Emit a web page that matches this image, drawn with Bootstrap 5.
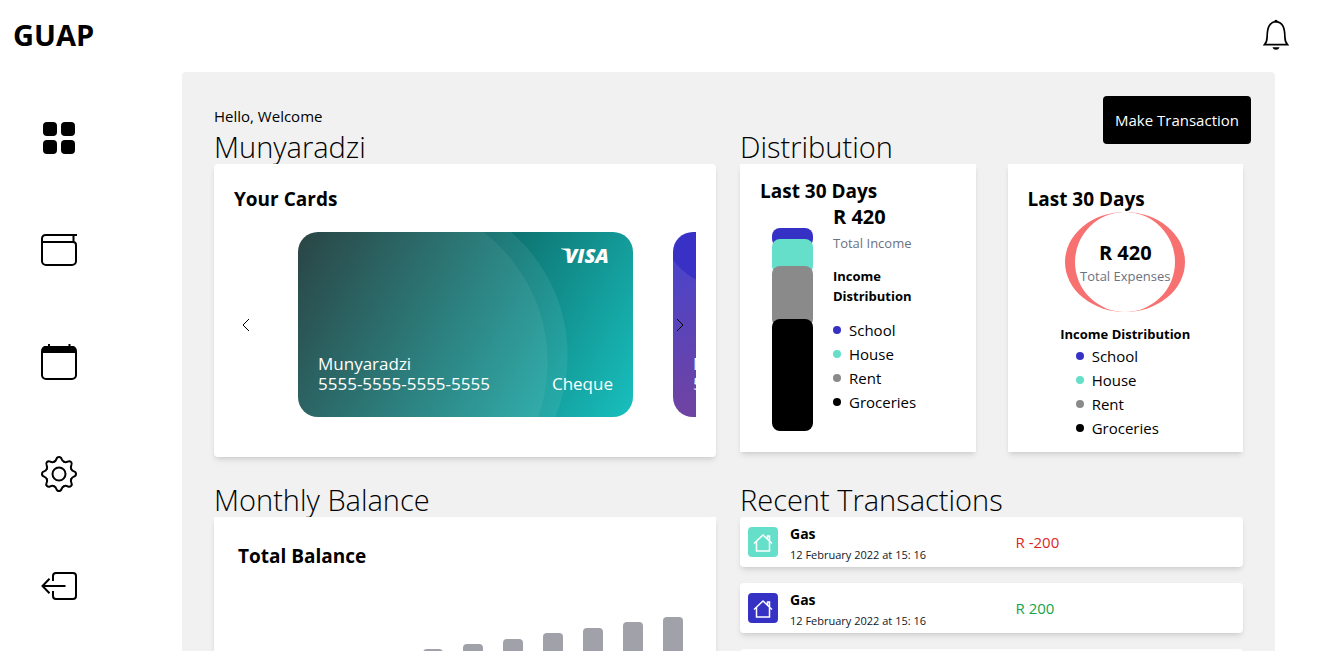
<!DOCTYPE html>
<html lang="en">
<head>
<meta charset="utf-8">
<meta name="viewport" content="width=device-width, initial-scale=1">
<title>GUAP</title>
<link href="https://cdn.jsdelivr.net/npm/bootstrap@5.3.0/dist/css/bootstrap.min.css" rel="stylesheet">
<style>
  body { font-family: "Open Sans", "Noto Sans", sans-serif; font-weight: 400; font-size: 15px; line-height: 24px; color: #000; background: #fff; }
  .topbar { height: 72px; padding: 0 34px 2px 13px; }
  .brand { font-size: 29px; font-weight: 700; line-height: 36px; color: #000; text-decoration: none; }
  .side { flex: 0 0 182px; padding: 48px 0 0 41px; }
  .side ul { gap: 76px; }
  .side a { display: block; width: 36px; height: 36px; color: #000; }
  .side svg { display: block; }
  .board { background: #f1f1f1; border-radius: 4px; margin-right: 48px; padding: 32px; min-width: 0; }
  .board-grid { display: grid; grid-template-columns: minmax(0, 502fr) minmax(0, 503fr); gap: 24px; }
  .pair { display: grid; grid-template-columns: repeat(2, minmax(0, 1fr)); gap: 32px; }
  h2 { font-size: 29px; line-height: 34px; padding-top: 2px; font-weight: 300; margin: 0; }
  h3 { font-size: 19px; line-height: 26px; padding-top: 2px; font-weight: 700; margin: 0; }
  .amount { font-size: 20px; line-height: 26px; font-weight: 700; }
  .tile { border: 0; border-radius: 0; color: #000; box-shadow: 0 4px 6px -1px rgba(0,0,0,.1), 0 2px 4px -2px rgba(0,0,0,.1); }
  .tile-round { border-radius: 4px; }
  .wallet { padding: 20px; }
  .btn-make { background: #000; color: #fff; border: 0; border-radius: 4px; font-size: 15px; line-height: 24px; padding: 12px; }
  .btn-make:hover { background: #222; color: #fff; }
  .slides { overflow: hidden; gap: 40px; padding: 20px 0; }
  .pay-card { flex: 0 0 335px; height: 185px; border-radius: 20px; padding: 16px 20px 23px; color: #fff; font-size: 17px; line-height: 20px; }
  .pay-card:first-child { margin-left: calc(50% - 167px); }
  .pay-teal { background:
    radial-gradient(circle at 86px 130px, rgba(255,255,255,.06) 163px, transparent 164px),
    radial-gradient(circle at 108px 123px, rgba(255,255,255,.07) 161px, transparent 162px),
    linear-gradient(120deg, #0c2a2a 0%, #0e7270 48%, #18c0be 100%); }
  .pay-violet { background:
    radial-gradient(circle at 55px -13px, #3931c6 68px, transparent 69px),
    linear-gradient(160deg, #4444d2, #6f43a2 60%); }
  .arrow { background: none; border: 0; padding: 0; width: 24px; height: 24px; line-height: 0; color: #000; }
  .stack { flex: 0 0 41px; margin: 24px 0 0 12px; }
  .stack div { border-radius: 8px; }
  .stack div + div { margin-top: -8px; }
  .c-blue { background: #3531c4; } .c-teal { background: #66dfca; } .c-grey { background: #8a8a8a; } .c-black { background: #000; }
  .muted-note { font-size: 13px; line-height: 20px; color: #6b7280; }
  .sub { font-size: 13px; line-height: 20px; font-weight: 700; margin: 0; }
  .dot { width: 8px; height: 8px; border-radius: 50%; flex: none; }
  .income { padding: 12px 20px 20px; }
  .income .amount { margin-bottom: 3px; }
  .income .sub { margin: 13px 0 12px; }
  .spend { padding: 20px 20px 12px; }
  .ring { width: 120px; height: 100px; padding-top: 2px; border: 0 solid #f87171; border-width: 0 10px; border-radius: 50%; white-space: nowrap; }
  .balance { padding: 24px; }
  .chart { gap: 20px; margin-top: 48px; padding: 0 9px; }
  .chart div { width: 20px; border-radius: 4px 4px 0 0; background: #a1a1aa; }
  .entries { gap: 16px; }
  .entry { height: 50px; padding: 0 8px; flex-direction: row; align-items: center; }
  .entry-main { flex: 0 0 50%; gap: 12px; }
  .entry-icon { width: 30px; height: 30px; border-radius: 4px; }
  .entry-text { padding-top: 4px; }
  .entry strong { font-size: 14px; font-weight: 700; line-height: 22px; }
  .entry time { font-size: 11px; line-height: 20px; color: #111827; }
</style>
</head>
<body class="vh-100 overflow-hidden">
<header class="topbar d-flex align-items-center justify-content-between">
  <a class="brand" href="#">GUAP</a>
  <a href="#" class="text-black" aria-label="Notifications">
    <svg class="d-block" width="26" height="32" viewBox="0 0 26 32" fill="none" stroke="currentColor" stroke-width="1.7"><path d="M1.500 25.700h23c-2-2-2.500-4-2.600-7.700C21.700 9 20 3.300 13 2.700 6 3.300 4.300 9 4.100 18c-.1 3.700-.6 5.700-2.600 7.700z"/><path d="M11.300 2.500a1.700 1.700 0 0 1 3.400 0zM9.500 28.200h7c-.5 1.700-1.800 2.500-3.500 2.500s-3-.8-3.500-2.500z" fill="currentColor" stroke="none"/></svg>
  </a>
</header>
<div class="d-flex">
  <nav class="side" aria-label="Main">
    <ul class="list-unstyled d-flex flex-column m-0">
      <li><a href="#" aria-label="Dashboard"><svg width="36" height="36" fill="currentColor"><rect x="2" y="2" width="14" height="14" rx="4"/><rect x="20" y="2" width="14" height="14" rx="4"/><rect x="2" y="20" width="14" height="14" rx="4"/><rect x="20" y="20" width="14" height="14" rx="4"/></svg></a></li>
      <li><a href="#" aria-label="Wallet"><svg width="36" height="36" fill="none" stroke="currentColor" stroke-width="2"><path d="M36 3H4.500A3.500 3.500 0 0 0 1 6.500V29a4 4 0 0 0 4 4h26a4 4 0 0 0 4-4V13a3 3 0 0 0-3-3H1M32.500 3v7"/></svg></a></li>
      <li><a href="#" aria-label="Calendar"><svg width="36" height="36" fill="none" stroke="currentColor" stroke-width="2"><rect x="1" y="3" width="34" height="32" rx="4"/><path d="M1 8V6a4 4 0 0 1 4-4h26a4 4 0 0 1 4 4v2z" fill="currentColor" stroke="none"/><path d="M1 7h34" stroke-width="4"/><path d="M8 0v4M28.500 0v4"/></svg></a></li>
      <li><a href="#" aria-label="Settings"><svg width="36" height="36" viewBox="0 0 36 36" fill="none" stroke="currentColor" stroke-width="2" stroke-linecap="round"><circle cx="18" cy="18" r="6.500"/><path id="tooth" d="M12.950 5.800C14.200 5.300 15 4.400 15.400 3.100 15.800 1.700 16.600 1 18 1s2.200.7 2.600 2.100c.4 1.300 1.200 2.200 2.450 2.700"/><use href="#tooth" transform="rotate(45 18 18)"/><use href="#tooth" transform="rotate(90 18 18)"/><use href="#tooth" transform="rotate(135 18 18)"/><use href="#tooth" transform="rotate(180 18 18)"/><use href="#tooth" transform="rotate(225 18 18)"/><use href="#tooth" transform="rotate(270 18 18)"/><use href="#tooth" transform="rotate(315 18 18)"/></svg></a></li>
      <li><a href="#" aria-label="Log out"><svg width="36" height="36" fill="none" stroke="currentColor" stroke-width="2"><path d="M12 13V8a3 3 0 0 1 3-3h17a3 3 0 0 1 3 3v20a3 3 0 0 1-3 3H15a3 3 0 0 1-3-3v-5M24.500 18H1.500M8.500 10.800 1.500 18l7 7.200"/></svg></a></li>
    </ul>
  </nav>

  <main class="board flex-grow-1 position-relative">
    <button type="button" class="btn btn-make position-absolute top-0 end-0 m-4">Make Transaction</button>
    <div>Hello, Welcome</div>
    <div class="board-grid">
      <section>
        <h2>Munyaradzi</h2>
        <div class="card tile tile-round wallet">
          <h3>Your Cards</h3>
          <div class="position-relative">
            <div class="slides d-flex">
              <div class="pay-card pay-teal d-flex flex-column justify-content-between">
                <svg class="align-self-end" width="52" height="17" viewBox="0 0 52 17" role="img" aria-label="VISA" fill="#fff"><text x="4" y="15" font-family="Open Sans, sans-serif" font-size="20" font-weight="800" font-style="italic">VISA</text><path d="M0 .5h8.500L10 8C8.500 4.500 5 1.800 0 1z"/></svg>
                <div class="d-flex justify-content-between align-items-end"><div>Munyaradzi<br>5555-5555-5555-5555</div><div>Cheque</div></div>
              </div>
              <div class="pay-card pay-violet d-flex flex-column justify-content-end">
                <div>Munyaradzi<br>5555-5555-5555-5555</div>
              </div>
            </div>
            <button type="button" class="arrow position-absolute top-50 start-0 translate-middle-y" aria-label="Previous card"><svg width="8" height="12" fill="none" stroke="currentColor"><path d="M7 0 1 6l6 6"/></svg></button>
            <button type="button" class="arrow position-absolute top-50 end-0 translate-middle-y me-1" aria-label="Next card"><svg width="8" height="12" fill="none" stroke="currentColor"><path d="m1 0 6 6-6 6"/></svg></button>
          </div>
        </div>
      </section>

      <section>
        <h2>Distribution</h2>
        <div class="pair">
          <div class="card tile income">
            <h3>Last 30 Days</h3>
            <div class="d-flex align-items-start">
              <div class="stack">
                <div class="c-blue" style="height:19px"></div>
                <div class="c-teal" style="height:35px"></div>
                <div class="c-grey" style="height:61px"></div>
                <div class="c-black" style="height:112px"></div>
              </div>
              <div class="ms-3 ps-1">
                <div class="amount">R 420</div>
                <div class="muted-note">Total Income</div>
                <h4 class="sub">Income<br>Distribution</h4>
                <ul class="list-unstyled m-0">
                  <li class="d-flex align-items-center gap-2"><span class="dot c-blue"></span>School</li>
                  <li class="d-flex align-items-center gap-2"><span class="dot c-teal"></span>House</li>
                  <li class="d-flex align-items-center gap-2"><span class="dot c-grey"></span>Rent</li>
                  <li class="d-flex align-items-center gap-2"><span class="dot c-black"></span>Groceries</li>
                </ul>
              </div>
            </div>
          </div>
          <div class="card tile spend">
            <h3>Last 30 Days</h3>
            <div class="d-flex flex-column align-items-center">
              <div class="ring d-flex flex-column align-items-center justify-content-center">
                <div class="amount">R 420</div>
                <div class="muted-note">Total Expenses</div>
              </div>
              <h4 class="sub mt-2 pt-1">Income Distribution</h4>
              <ul class="list-unstyled m-0 me-3">
                <li class="d-flex align-items-center gap-2"><span class="dot c-blue"></span>School</li>
                <li class="d-flex align-items-center gap-2"><span class="dot c-teal"></span>House</li>
                <li class="d-flex align-items-center gap-2"><span class="dot c-grey"></span>Rent</li>
                <li class="d-flex align-items-center gap-2"><span class="dot c-black"></span>Groceries</li>
              </ul>
            </div>
          </div>
        </div>
      </section>

      <section>
        <h2>Monthly Balance</h2>
        <div class="card tile balance">
          <h3>Total Balance</h3>
          <div class="chart d-flex align-items-end justify-content-end">
            <div style="height:64px"></div>
            <div style="height:69px"></div>
            <div style="height:75px"></div>
            <div style="height:80px"></div>
            <div style="height:85px"></div>
            <div style="height:90px"></div>
            <div style="height:96px"></div>
            <div style="height:101px"></div>
            <div style="height:107px"></div>
            <div style="height:112px"></div>
          </div>
        </div>
      </section>

      <section>
        <h2>Recent Transactions</h2>
        <div class="entries d-flex flex-column">
          <div class="card tile tile-round entry">
            <div class="entry-main d-flex align-items-center">
              <span class="entry-icon c-teal d-flex align-items-center justify-content-center"><svg width="20" height="20" fill="none" stroke="#fff" stroke-width="1.500"><path d="M1 11.500 10 3l9 8.500M3.500 9.500V19h13V9.500M14.500 7V4h2v5"/></svg></span>
              <div class="entry-text d-flex flex-column"><strong>Gas</strong><time datetime="2022-02-12T15:16">12 February 2022 at 15: 16</time></div>
            </div>
            <span class="ps-4" style="color:#dc2626">R -200</span>
          </div>
          <div class="card tile tile-round entry">
            <div class="entry-main d-flex align-items-center">
              <span class="entry-icon c-blue d-flex align-items-center justify-content-center"><svg width="20" height="20" fill="none" stroke="#fff" stroke-width="1.500"><path d="M1 11.500 10 3l9 8.500M3.500 9.500V19h13V9.500M14.500 7V4h2v5"/></svg></span>
              <div class="entry-text d-flex flex-column"><strong>Gas</strong><time datetime="2022-02-12T15:16">12 February 2022 at 15: 16</time></div>
            </div>
            <span class="ps-4" style="color:#16a34a">R 200</span>
          </div>
          <div class="card tile tile-round entry"></div>
        </div>
      </section>
    </div>
  </main>
</div>
<script src="https://cdn.jsdelivr.net/npm/bootstrap@5.3.0/dist/js/bootstrap.bundle.min.js"></script>
</body>
</html>
